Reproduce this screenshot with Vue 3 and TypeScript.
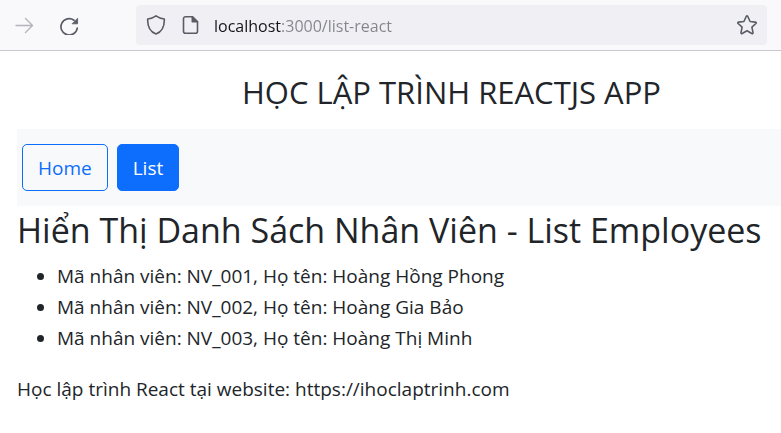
<script setup lang="ts">
import { ref } from 'vue'

interface Employee {
  id: string
  name: string
}

const address = ref('localhost:3000/list-react')

const employees: Employee[] = [
  { id: 'NV_001', name: 'Hoàng Hồng Phong' },
  { id: 'NV_002', name: 'Hoàng Gia Bảo' },
  { id: 'NV_003', name: 'Hoàng Thị Minh' },
]
</script>

<template>
  <div class="page">
    <header class="toolbar">
      <button class="tool" type="button" aria-label="Forward" disabled>
        <svg width="20" height="20" viewBox="0 0 20 20" fill="none" stroke="#b4b4ba" stroke-width="1.4" stroke-linecap="round" stroke-linejoin="round">
          <path d="M1 10.500h16M10.500 3.500l7 7-7 7" />
        </svg>
      </button>
      <button class="tool" type="button" aria-label="Reload">
        <svg width="20" height="20" viewBox="0 0 20 20" fill="none" stroke="#5b5b66" stroke-width="1.700" stroke-linecap="round">
          <path d="M14 5.200A8.200 8.200 0 1 0 17.300 13" />
          <path d="M17.600 3.600v5.200h-5.200z" fill="#5b5b66" stroke-width=".8" stroke-linejoin="round" />
        </svg>
      </button>
      <div class="urlbar">
        <svg width="20" height="20" viewBox="0 0 20 20" fill="none" stroke="#5b5b66" stroke-width="1.600" stroke-linejoin="round">
          <path d="M10 .9C7.500 2.700 4.500 3.700 1.700 4c-.3 7 1.800 12.500 8.300 15 6.500-2.500 8.600-8 8.300-15C15.500 3.700 12.500 2.700 10 .9z" />
        </svg>
        <svg width="20" height="20" viewBox="0 0 20 20" fill="none" stroke="#5b5b66" stroke-width="1.600" stroke-linejoin="round">
          <path d="M5.500 1.800h7l5 5v9.400a2 2 0 0 1-2 2h-10a2 2 0 0 1-2-2V3.800a2 2 0 0 1 2-2z" />
          <path d="M12.300 1.800v5h5.200z" fill="#5b5b66" />
        </svg>
        <input v-model="address" class="address" type="text" aria-label="Address" spellcheck="false" />
        <button class="star" type="button" aria-label="Bookmark this page">
          <svg width="20" height="20" viewBox="0 0 20 20" fill="none" stroke="#5b5b66" stroke-width="1.600" stroke-linejoin="round">
            <path d="M9.200 1.500q.8-1.200 1.600 0l2.300 5 5.300.6q1.300.3.500 1.400l-4 3.700 1.100 5.400q.1 1.400-1.200.9L10 15.800l-4.800 2.700q-1.300.5-1.200-.9l1.100-5.400-4-3.700q-.8-1.100.5-1.400l5.300-.6z" />
          </svg>
        </button>
      </div>
    </header>

    <main class="content">
      <h1 class="title">HỌC LẬP TRÌNH REACTJS APP</h1>
      <nav class="menu">
        <a class="btn" href="/">Home</a>
        <a class="btn active" href="/list-react" aria-current="page">List</a>
      </nav>
      <h2 class="heading">Hiển Thị Danh Sách Nhân Viên - List Employees</h2>
      <ul class="employees">
        <li v-for="employee in employees" :key="employee.id">
          Mã nhân viên: {{ employee.id }}, Họ tên: {{ employee.name }}
        </li>
      </ul>
      <p class="note">Học lập trình React tại website: https://ihoclaptrinh.com</p>
    </main>
  </div>
</template>

<style>
body {
  margin: 0;
  background: #fff;
}
</style>

<style scoped>
.page {
  font-family: "Open Sans", "Noto Sans", sans-serif;
  font-size: 19px;
  line-height: 31px;
  color: #212529;
}

.toolbar {
  display: flex;
  align-items: center;
  padding: 5px 14px 5px 15px;
  background: #f9f9fb;
  border-bottom: 1px solid #c9c9cd;
}

.tool,
.star {
  display: flex;
  padding: 0;
  border: 0;
  background: none;
}

.tool {
  margin-right: 25px;
}

.urlbar {
  display: flex;
  flex: 1;
  align-items: center;
  gap: 14px;
  height: 40px;
  margin-left: 31px;
  padding: 0 10px;
  border-radius: 4px;
  background: #f0f0f4;
  box-sizing: border-box;
}

.address {
  flex: 1;
  min-width: 0;
  padding: 2px 0 0;
  border: 0;
  outline: 0;
  font: inherit;
  font-size: 16px;
  color: transparent;
  caret-color: #15141a;
  /* The host name is dark, the port and path are grey. */
  background: linear-gradient(to right, #15141a 67px, #84848b 67px);
  background-clip: text;
}

.content {
  padding-left: 17px;
}

.title {
  margin: 0;
  padding: 21px 0 17px 105px;
  font-size: 31px;
  font-weight: 400;
  line-height: 40px;
  text-align: center;
}

.menu {
  display: flex;
  gap: 9px;
  padding: 15px 5px;
  background: #f8f9fa;
}

.btn {
  padding: 8px 15px 6px;
  border: 1px solid #0d6efd;
  border-radius: 5px;
  color: #0d6efd;
  text-decoration: none;
}

.btn.active {
  color: #fff;
  background: #0d6efd;
}

.heading {
  margin: 0;
  padding: 1px 0 8px;
  font-size: 34px;
  font-weight: 400;
  line-height: 46px;
  white-space: nowrap;
}

.employees {
  margin: 0 0 20px;
  padding-left: 40px;
}

.note {
  margin: 0;
}
</style>
